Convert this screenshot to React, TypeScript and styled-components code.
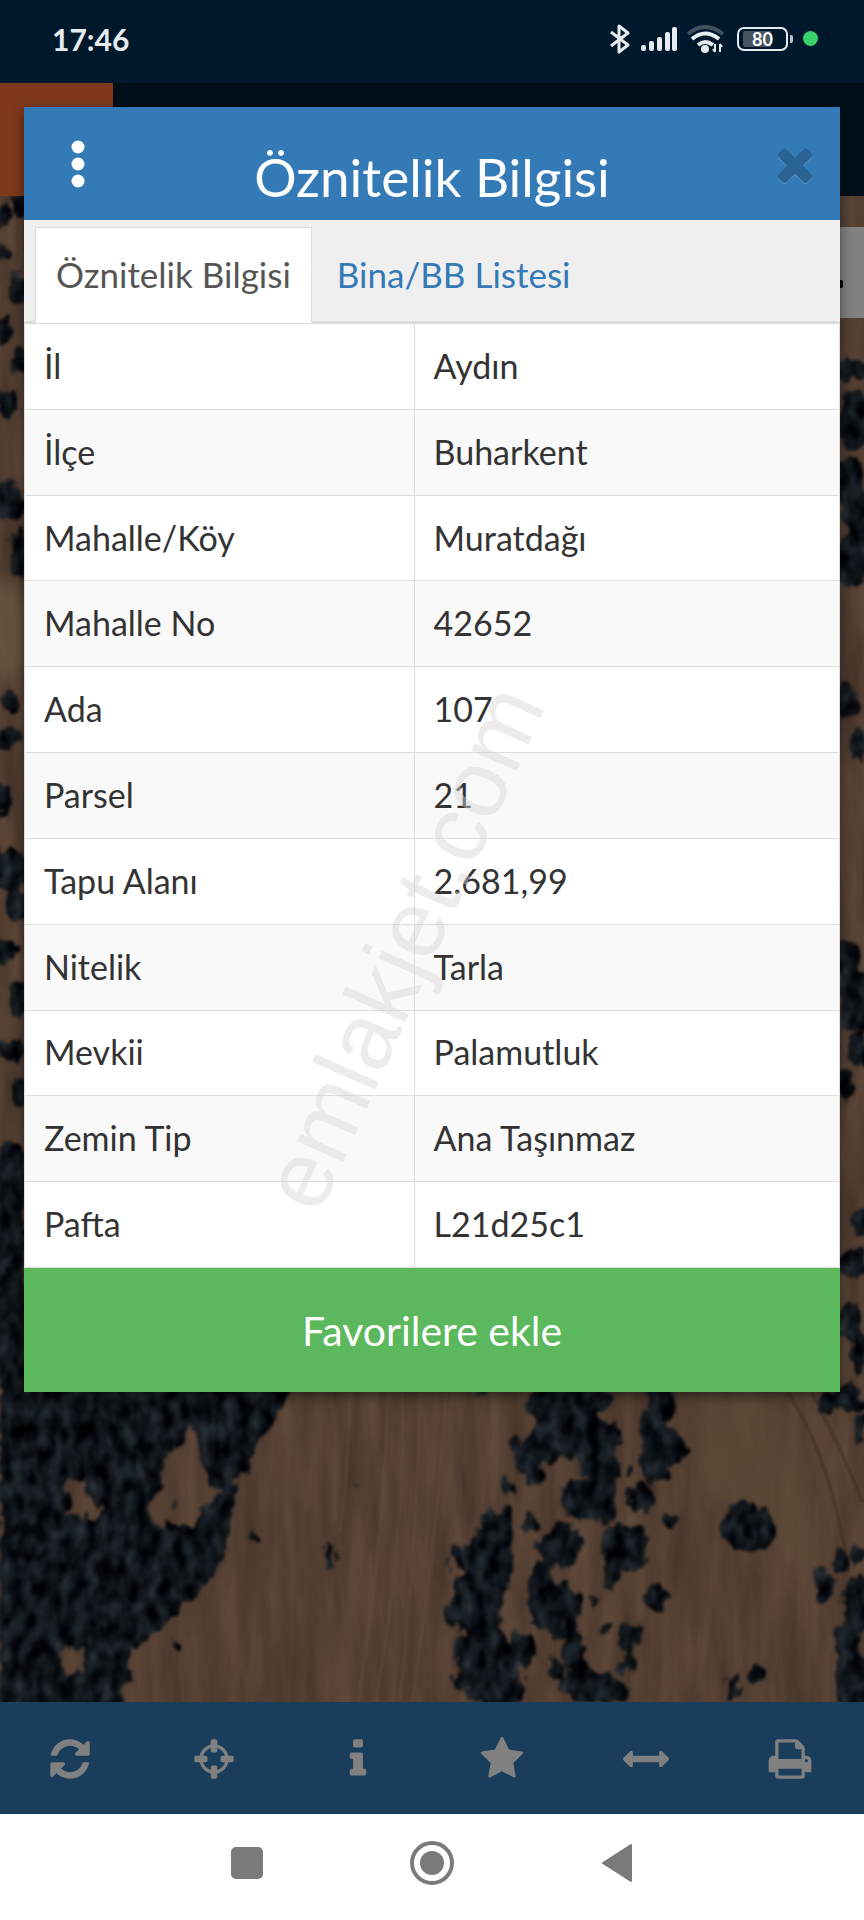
import React from 'react'
import styled, { createGlobalStyle } from 'styled-components'

const colors = {
  primaryBlue: '#337ab7',
  green: '#5cb85c',
  border: '#dddddd',
  stripe: '#f9f9f9',
  tabs: '#efefef',
  text: '#333333',
  textMuted: '#555555',
  statusBar: '#00182b',
  appHeader: '#010f19',
  appLogo: '#80391a',
  toolbar: '#1a3d5c',
  toolbarIcon: '#808080',
  navIcon: '#7a7a7a',
}

const GlobalStyle = createGlobalStyle`
  * {
    box-sizing: border-box;
  }
  body {
    margin: 0;
    font-family: 'Lato', sans-serif;
    color: ${colors.text};
  }
  button {
    font-family: inherit;
    border: none;
    padding: 0;
    background: none;
    cursor: pointer;
  }
`

const Screen = styled.div`
  position: relative;
  display: flex;
  flex-direction: column;
  min-height: 100vh;
  overflow: hidden;
`
const StatusBar = styled.div`
  display: flex;
  justify-content: space-between;
  align-items: center;
  height: 83px;
  padding: 0 46px 6px 52px;
  background-color: ${colors.statusBar};
`
const Clock = styled.span`
  font-size: 30px;
  font-weight: 700;
  color: #e6ecf0;
`
const StatusIcons = styled.div`
  display: flex;
  align-items: center;
  gap: 10px;
`
const Battery = styled.div`
  display: flex;
  align-items: center;
  margin-left: 3px;
`
const BatteryLevel = styled.span`
  width: 51px;
  height: 24px;
  border: 2px solid #e6ecf0;
  border-radius: 7px;
  background: linear-gradient(90deg, #46535f 72%, transparent 72%) content-box;
  padding: 2px 4px;
  font: 700 18px/16px 'Lato', sans-serif;
  text-align: center;
  color: #ffffff;
`
const BatteryTip = styled.span`
  width: 3px;
  height: 8px;
  margin-left: 2px;
  border-radius: 0 2px 2px 0;
  background-color: #b9c2ca;
`
const PrivacyDot = styled.span`
  width: 15px;
  height: 15px;
  border-radius: 50%;
  background-color: #3ad26c;
`

const AppHeader = styled.header`
  height: 113px;
  background-color: ${colors.appHeader};
`
const AppLogo = styled.div`
  width: 113px;
  height: 100%;
  background-color: ${colors.appLogo};
`
const MapArea = styled.main`
  position: relative;
  flex: 1;
  min-height: 1200px;
  background-color: #54402f;
`
const MapCanvas = styled.svg`
  position: absolute;
  inset: 0;
  width: 100%;
  height: 100%;
`
const MapControl = styled.button`
  position: absolute;
  top: 31px;
  right: 0;
  display: flex;
  align-items: center;
  width: 48px;
  height: 91px;
  padding: 22px 20px 0;
  background-color: #828282;
  &::before {
    content: '';
    width: 7px;
    height: 8px;
    border-radius: 2px;
    background-color: #000000;
  }
`

const Toolbar = styled.nav`
  display: grid;
  grid-template-columns: repeat(6, 1fr);
  height: 112px;
  background-color: ${colors.toolbar};
`
const ToolButton = styled.button`
  display: flex;
  justify-content: center;
  align-items: center;
  padding: 2px 4px 0 0;
  color: ${colors.toolbarIcon};
`
const SystemNav = styled.nav`
  display: flex;
  justify-content: center;
  align-items: center;
  gap: 137px;
  height: 106px;
  padding-bottom: 8px;
  background-color: #ffffff;
`
const NavButton = styled.button`
  display: flex;
  justify-content: center;
  width: 48px;
  color: ${colors.navIcon};
`

const Dialog = styled.section`
  position: absolute;
  top: 107px;
  left: 24px;
  right: 24px;
  background-color: #ffffff;
  box-shadow: 0 4px 12px rgba(0, 0, 0, 0.5);
`
const DialogHeader = styled.div`
  display: grid;
  grid-template-columns: 108px 1fr 90px;
  height: 113px;
  background-color: ${colors.primaryBlue};
`
const DialogTitle = styled.h1`
  margin: 0;
  padding: 30px 36px 0 18px;
  font-size: 53px;
  font-weight: 400;
  line-height: 80px;
  text-align: center;
  white-space: nowrap;
  color: #ffffff;
`
const HeaderButton = styled.button`
  display: flex;
  justify-content: center;
  align-items: center;
  color: #ffffff;
`
const CloseButton = styled(HeaderButton)`
  color: #296293;
  svg {
    filter: drop-shadow(0 1px 0 #5c95c5);
  }
`
const TabList = styled.div`
  display: flex;
  height: 103px;
  padding: 7px 11px 0;
  background-color: ${colors.tabs};
  border-bottom: 2px solid ${colors.border};
`
const Tab = styled.button<{ $active?: boolean }>`
  margin-bottom: ${({ $active }) => ($active ? '-2px' : '0')};
  padding: ${({ $active }) => ($active ? '0 20px 2px' : '0 20px')};
  margin-right: 4px;
  border: 1px solid ${({ $active }) => ($active ? colors.border : 'transparent')};
  border-bottom-color: transparent;
  background-color: ${({ $active }) => ($active ? '#ffffff' : 'transparent')};
  font-size: 35px;
  color: ${({ $active }) => ($active ? colors.textMuted : colors.primaryBlue)};
`
const Table = styled.table`
  width: 100%;
  height: 945px;
  table-layout: fixed;
  border-collapse: collapse;
`
const Row = styled.tr`
  &:nth-child(even) {
    background-color: ${colors.stripe};
  }
`
const Label = styled.th`
  width: 47.8%;
  padding: 0 19px 2px;
  border: 1px solid ${colors.border};
  font-size: 34px;
  font-weight: 400;
  text-align: left;
`
const Value = styled.td`
  padding: 0 19px 2px;
  border: 1px solid ${colors.border};
  font-size: 34px;
`
const FavoriteButton = styled.button`
  display: block;
  width: 100%;
  height: 124px;
  background-color: ${colors.green};
  font-size: 41px;
  color: #ffffff;
`
const WatermarkLayer = styled.div`
  position: absolute;
  inset: 0;
  display: flex;
  justify-content: center;
  align-items: center;
  pointer-events: none;
`
const Watermark = styled.span`
  padding-bottom: 64px;
  font: 400 95px/96px 'Liberation Sans', sans-serif;
  color: rgba(212, 212, 212, 0.45);
  transform: rotate(-66deg);
`

const attributes = [
  ['İl', 'Aydın'],
  ['İlçe', 'Buharkent'],
  ['Mahalle/Köy', 'Muratdağı'],
  ['Mahalle No', '42652'],
  ['Ada', '107'],
  ['Parsel', '21'],
  ['Tapu Alanı', '2.681,99'],
  ['Nitelik', 'Tarla'],
  ['Mevkii', 'Palamutluk'],
  ['Zemin Tip', 'Ana Taşınmaz'],
  ['Pafta', 'L21d25c1'],
]

const icons = {
  refresh:
    'M1639 1056q0 5-1 7-64 268-268 434.5t-478 166.5q-146 0-282.5-55t-243.5-157l-129 129q-19 19-45 19t-45-19-19-45v-448q0-26 19-45t45-19h448q26 0 45 19t19 45-19 45l-137 137q71 66 161 102t187 36q134 0 250-65t186-179q11-17 53-117 8-23 30-23h192q13 0 22.5 9.5t9.5 22.5zm25-800v448q0 26-19 45t-45 19h-448q-26 0-45-19t-19-45 19-45l138-138q-148-137-349-137-134 0-250 65t-186 179q-11 17-53 117-8 23-30 23h-199q-13 0-22.5-9.5t-9.5-22.5v-7q65-268 270-434.5t480-166.5q146 0 284 55.5t245 156.5l130-129q19-19 45-19t45 19 19 45z',
  crosshairs:
    'M1325 1024h-109q-26 0-45-19t-19-45v-128q0-26 19-45t45-19h109q-32-108-112.5-188.5t-188.5-112.5v109q0 26-19 45t-45 19h-128q-26 0-45-19t-19-45v-109q-108 32-188.5 112.5t-112.5 188.5h109q26 0 45 19t19 45v128q0 26-19 45t-45 19h-109q32 108 112.5 188.5t188.5 112.5v-109q0-26 19-45t45-19h128q26 0 45 19t19 45v109q108-32 188.5-112.5t112.5-188.5zm339-192v128q0 26-19 45t-45 19h-143q-37 161-154.5 278.5t-278.5 154.5v143q0 26-19 45t-45 19h-128q-26 0-45-19t-19-45v-143q-161-37-278.5-154.5t-154.5-278.5h-143q-26 0-45-19t-19-45v-128q0-26 19-45t45-19h143q37-161 154.5-278.5t278.5-154.5v-143q0-26 19-45t45-19h128q26 0 45 19t19 45v143q161 37 278.5 154.5t154.5 278.5h143q26 0 45 19t19 45z',
  info: 'M1216 1344v128q0 26-19 45t-45 19h-512q-26 0-45-19t-19-45v-128q0-26 19-45t45-19h64v-384h-64q-26 0-45-19t-19-45v-128q0-26 19-45t45-19h384q26 0 45 19t19 45v576h64q26 0 45 19t19 45zm-128-1152v192q0 26-19 45t-45 19h-256q-26 0-45-19t-19-45v-192q0-26 19-45t45-19h256q26 0 45 19t19 45z',
  star: 'M1728 647q0 22-26 48l-363 354 86 500q1 7 1 20 0 21-10.5 35.5t-30.5 14.5q-19 0-40-12l-449-236-449 236q-22 12-40 12-21 0-31.5-14.5t-10.5-35.5q0-6 2-20l86-500-364-354q-25-27-25-48 0-37 56-46l502-73 225-455q19-41 49-41t49 41l225 455 502 73q56 9 56 46z',
  arrows:
    'M1792 896q0 26-19 45l-256 256q-19 19-45 19t-45-19-19-45v-128h-1024v128q0 26-19 45t-45 19-45-19l-256-256q-19-19-19-45t19-45l256-256q19-19 45-19t45 19 19 45v128h1024v-128q0-26 19-45t45-19 45 19l256 256q19 19 19 45z',
  print:
    'M448 1536h896v-256h-896v256zm0-640h896v-384h-160q-40 0-68-28t-28-68v-160h-640v640zm1152 64q0-26-19-45t-45-19-45 19-19 45 19 45 45 19 45-19 19-45zm128 0v416q0 13-9.5 22.5t-22.5 9.5h-224v160q0 40-28 68t-68 28h-960q-40 0-68-28t-28-68v-160h-224q-13 0-22.5-9.5t-9.5-22.5v-416q0-79 56.5-135.5t135.5-56.5h64v-544q0-40 28-68t68-28h672q40 0 88 20t76 48l152 152q28 28 48 76t20 88v256h64q79 0 135.5 56.5t56.5 135.5z',
  close:
    'M1490 1322q0 40-28 68l-136 136q-28 28-68 28t-68-28l-294-294-294 294q-28 28-68 28t-68-28l-136-136q-28-28-28-68t28-68l294-294-294-294q-28-28-28-68t28-68l136-136q28-28 68-28t68 28l294 294 294-294q28-28 68-28t68 28l136 136q28 28 28 68t-28 68l-294 294 294 294q28 28 28 68z',
}

const tools: { icon: keyof typeof icons; label: string }[] = [
  { icon: 'refresh', label: 'Yenile' },
  { icon: 'crosshairs', label: 'Konum' },
  { icon: 'info', label: 'Bilgi' },
  { icon: 'star', label: 'Favoriler' },
  { icon: 'arrows', label: 'Ölçüm' },
  { icon: 'print', label: 'Yazdır' },
]

const Icon = ({ name, size = 46 }: { name: keyof typeof icons; size?: number }) => (
  <svg width={size} height={size} viewBox="0 0 1792 1792" fill="currentColor" aria-hidden>
    <path d={icons[name]} />
  </svg>
)

// cx, cy, rx, ry
const trees = [
  [548, 1404, 20, 22], [585, 1398, 28, 12], [552, 1426, 14, 14], [516, 1440, 5, 9],
  [530, 1456, 12, 20], [545, 1444, 18, 18], [575, 1430, 26, 26], [600, 1450, 20, 34],
  [606, 1490, 12, 34], [584, 1498, 22, 20], [570, 1494, 9, 14], [534, 1480, 7, 9],
  [662, 1398, 14, 18], [652, 1425, 12, 18], [664, 1446, 20, 22], [653, 1466, 14, 16],
  [640, 1498, 14, 16], [629, 1468, 5, 8], [507, 1486, 4, 7], [506, 1508, 4, 5],
  [670, 1519, 8, 7], [748, 1527, 26, 25], [497, 1530, 18, 20], [490, 1560, 24, 34],
  [458, 1558, 8, 10], [478, 1600, 26, 40], [452, 1616, 8, 8], [482, 1650, 26, 30],
  [462, 1680, 10, 14], [496, 1680, 28, 30], [520, 1650, 12, 20], [531, 1522, 6, 10],
  [562, 1545, 20, 24], [547, 1545, 9, 12], [542, 1595, 15, 38], [562, 1610, 18, 28],
  [626, 1548, 24, 24], [612, 1562, 10, 26], [656, 1598, 12, 14], [594, 1602, 3, 4],
  [605, 1629, 5, 8], [632, 1634, 14, 13], [630, 1655, 6, 14], [625, 1668, 5, 6],
  [572, 1650, 10, 22], [582, 1682, 16, 22], [556, 1668, 7, 12], [564, 1682, 5, 7],
  [605, 1684, 14, 18], [620, 1694, 10, 10], [732, 1686, 9, 11], [754, 1674, 9, 10],
  [826, 1586, 11, 16], [840, 1560, 8, 12], [858, 1552, 8, 10], [856, 1604, 14, 30],
  [846, 1640, 12, 14], [852, 1680, 18, 34], [826, 1402, 8, 8], [846, 1396, 16, 16],
  [861, 1425, 6, 16], [328, 1550, 6, 8], [333, 1560, 4, 6], [175, 1645, 4, 5],
  [358, 1487, 2, 3], [248, 1467, 3, 6], [254, 1538, 3, 4], [221, 1507, 9, 12],
  [228, 1518, 6, 9], [177, 1505, 3, 7], [483, 1394, 6, 4], [127, 1670, 3, 12],
  // trees down both sides of the dialog
  [4, 215, 6, 10], [20, 205, 10, 12], [4, 255, 7, 7], [18, 290, 10, 16], [4, 330, 8, 12],
  [20, 360, 8, 12], [6, 405, 10, 14], [10, 500, 14, 20], [20, 555, 10, 24], [10, 700, 9, 10],
  [8, 740, 14, 12], [4, 800, 8, 18], [10, 870, 22, 22], [16, 905, 14, 16], [4, 950, 10, 14],
  [18, 1000, 10, 18], [10, 1050, 16, 10], [20, 1090, 10, 12], [12, 1180, 16, 40],
  [8, 1250, 18, 50], [12, 1330, 20, 60], [852, 370, 20, 10], [856, 420, 18, 30],
  [846, 480, 16, 24], [858, 520, 14, 40], [852, 560, 18, 24], [846, 700, 14, 16],
  [860, 745, 10, 16], [846, 960, 12, 20], [856, 1000, 16, 30], [858, 1050, 10, 20],
  [844, 1085, 10, 14], [860, 1220, 10, 14], [850, 1262, 16, 14], [848, 1320, 12, 20],
  [860, 1350, 10, 24],
]

const SatelliteMap = () => (
  <MapCanvas viewBox="0 196 864 1505" preserveAspectRatio="xMidYMax slice" aria-hidden>
    <defs>
      <filter id="soil" x="0" y="0" width="100%" height="100%" colorInterpolationFilters="sRGB">
        <feTurbulence type="fractalNoise" baseFrequency="0.05 0.008" numOctaves="4" seed="4" />
        <feColorMatrix values="0.14 0 0 0 0.26  0.12 0 0 0 0.19  0.1 0 0 0 0.15  0 0 0 0 1" />
      </filter>
      <filter id="foliage" colorInterpolationFilters="sRGB">
        <feTurbulence type="fractalNoise" baseFrequency="0.08 0.05" numOctaves="3" seed="9" result="noise" />
        <feDisplacementMap in="SourceGraphic" in2="noise" scale="20" xChannelSelector="R" yChannelSelector="G" result="shape" />
        <feColorMatrix in="noise" values="0.3 0 0 0 -0.09  0.34 0 0 0 -0.09  0.34 0 0 0 -0.07  0 0 0 0 1" />
        <feComposite in2="shape" operator="in" />
        <feGaussianBlur stdDeviation="1.4" />
      </filter>
      <filter id="soft">
        <feGaussianBlur stdDeviation="8" />
      </filter>
    </defs>
    <rect y="196" width="864" height="1505" filter="url(#soil)" />
    <path d="M690 1392h90q30 70 45 170l-20 10q-60-80-110-80z" fill="#5e4c38" opacity="0.6" filter="url(#soft)" />
    <path d="M788 1392q45 70 60 180M812 1392q40 80 50 110" stroke="#3d2c23" strokeWidth="4" fill="none" opacity="0.4" />
    <g stroke="#6b503f" strokeWidth="4" fill="none" opacity="0.25">
      <path d="M388 1392q-2 130-30 309M402 1392q4 130-26 309M420 1392q-2 130-20 309M446 1392q-6 120-34 309M350 1392q-2 80-10 140" />
    </g>
    <ellipse cx="8" cy="630" rx="24" ry="50" fill="#665943" opacity="0.8" filter="url(#soft)" />
    <g filter="url(#foliage)">
      <path
        fillRule="evenodd"
        d="M0 1370H298L275 1420 258 1438 248 1462 236 1480 232 1530 222 1562 200 1592 180 1608 160 1632 134 1644 128 1670 122 1710H0zM195 1425L170 1450 160 1480 148 1512 165 1524 188 1524 206 1508 226 1494 208 1482 200 1452zM68 1480L66 1510 88 1518 100 1512 84 1478zM60 1650L62 1672 85 1668 82 1648z"
      />
      {trees.map(([cx, cy, rx, ry]) => (
        <ellipse key={`${cx}-${cy}`} cx={cx} cy={cy} rx={rx} ry={ry} />
      ))}
    </g>
  </MapCanvas>
)

const StatusGlyphs = () => (
  <>
    <svg width="22" height="32" viewBox="0 0 22 32" fill="none" stroke="#e6ecf0" strokeWidth="3" aria-hidden>
      <path d="M2 9l17 13-9 7V3l9 7L2 23" strokeLinejoin="round" />
    </svg>
    <svg width="36" height="24" viewBox="0 0 36 24" fill="#e6ecf0" aria-hidden>
      <rect y="18" width="5" height="6" rx="2" />
      <rect x="8" y="14" width="5" height="10" rx="2" />
      <rect x="16" y="10" width="5" height="14" rx="2" />
      <rect x="24" y="5" width="5" height="19" rx="2" />
      <rect x="31" width="5" height="24" rx="2" />
    </svg>
    <svg width="37" height="28" viewBox="0 0 37 28" fill="none" stroke="#e6ecf0" strokeWidth="4" aria-hidden>
      <path d="M1 9q17-14 35 0" stroke="#42515e" />
      <path d="M5 14q13-11 27 0M11 20q7-6 15 0" />
      <circle cx="18" cy="24" r="4" fill="#e6ecf0" stroke="none" />
      <path d="M28 19v8m-2-3l2 3M33 27v-8m2 3l-2-3" strokeWidth="2" />
    </svg>
  </>
)

const AttributeDialog = () => (
  <Dialog role="dialog" aria-labelledby="dialog-title">
    <DialogHeader>
      <HeaderButton aria-label="Menü">
        <svg width="14" height="48" viewBox="0 0 14 48" fill="currentColor">
          <circle cx="7" cy="7" r="6.5" />
          <circle cx="7" cy="24" r="6.5" />
          <circle cx="7" cy="41" r="6.5" />
        </svg>
      </HeaderButton>
      <DialogTitle id="dialog-title">Öznitelik Bilgisi</DialogTitle>
      <CloseButton aria-label="Kapat">
        <Icon name="close" size={52} />
      </CloseButton>
    </DialogHeader>
    <TabList role="tablist">
      <Tab role="tab" aria-selected $active>
        Öznitelik Bilgisi
      </Tab>
      <Tab role="tab" aria-selected={false}>
        Bina/BB Listesi
      </Tab>
    </TabList>
    <Table>
      <tbody>
        {attributes.map(([label, value]) => (
          <Row key={label}>
            <Label scope="row">{label}</Label>
            <Value>{value}</Value>
          </Row>
        ))}
      </tbody>
    </Table>
    <FavoriteButton>Favorilere ekle</FavoriteButton>
  </Dialog>
)

const App = () => {
  return (
    <Screen>
      <GlobalStyle />
      <StatusBar>
        <Clock>17:46</Clock>
        <StatusIcons>
          <StatusGlyphs />
          <Battery>
            <BatteryLevel>80</BatteryLevel>
            <BatteryTip />
          </Battery>
          <PrivacyDot />
        </StatusIcons>
      </StatusBar>
      <AppHeader>
        <AppLogo />
      </AppHeader>
      <MapArea>
        <SatelliteMap />
        <MapControl aria-label="Katmanlar" />
      </MapArea>
      <Toolbar>
        {tools.map(({ icon, label }) => (
          <ToolButton key={icon} aria-label={label}>
            <Icon name={icon} />
          </ToolButton>
        ))}
      </Toolbar>
      <SystemNav>
        <NavButton aria-label="Son uygulamalar">
          <svg width="32" height="32" viewBox="0 0 32 32" fill="currentColor">
            <rect width="32" height="32" rx="5" />
          </svg>
        </NavButton>
        <NavButton aria-label="Ana ekran">
          <svg width="44" height="44" viewBox="0 0 44 44" fill="currentColor">
            <circle cx="22" cy="22" r="20" fill="none" stroke="currentColor" strokeWidth="4" />
            <circle cx="22" cy="22" r="12" />
          </svg>
        </NavButton>
        <NavButton aria-label="Geri">
          <svg width="30" height="38" viewBox="0 0 30 38" fill="currentColor" stroke="currentColor" strokeWidth="2" strokeLinejoin="round">
            <path d="M1 19L29 1v36z" />
          </svg>
        </NavButton>
      </SystemNav>
      <AttributeDialog />
      <WatermarkLayer>
        <Watermark>emlakjet.com</Watermark>
      </WatermarkLayer>
    </Screen>
  )
}

export default App
